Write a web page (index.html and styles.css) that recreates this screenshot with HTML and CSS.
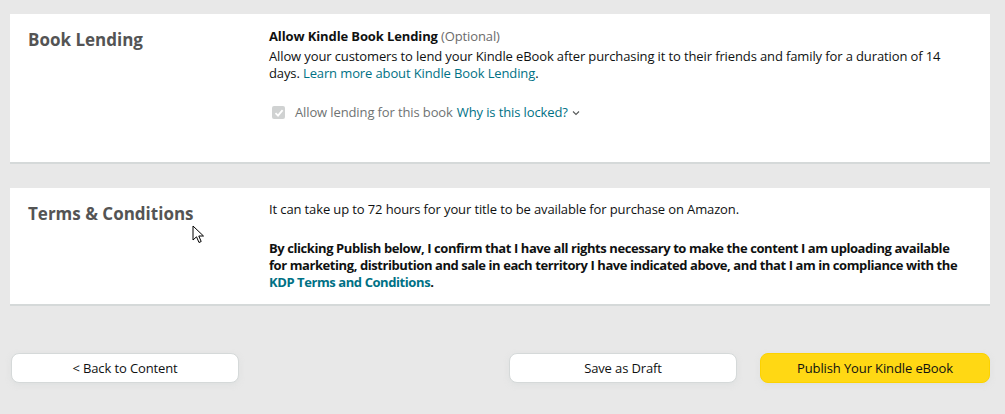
FILE: index.html
```html
<!DOCTYPE html>
<html>
<head>
<meta charset="utf-8">
<link rel="stylesheet" href="styles.css">
</head>
<body>
<div class="page">
  <section class="card card-lending">
    <h2 class="card-title">Book Lending</h2>
    <div class="card-body">
      <div class="label"><b>Allow Kindle Book Lending</b> <span class="muted">(Optional)</span></div>
      <p class="desc">Allow your customers to lend your Kindle eBook after purchasing it to their friends and family for a duration of 14 days. <a class="link" href="#">Learn more about Kindle Book Lending</a>.</p>
      <label class="check-row">
        <span class="checkbox"><svg width="10" height="10" viewBox="0 0 10 10"><path d="M1.5 5.2 L4 7.6 L8.6 2.2" fill="none" stroke="#fff" stroke-width="1.8"/></svg></span>
        <span class="check-text">Allow lending for this book</span>
        <a class="link" href="#">Why is this locked?</a>
        <svg class="chev" width="8" height="6" viewBox="0 0 8 6"><path d="M1 1.5 L4 4.5 L7 1.5" fill="none" stroke="#565959" stroke-width="1.1"/></svg>
      </label>
    </div>
  </section>

  <section class="card card-terms">
    <h2 class="card-title">Terms &amp; Conditions</h2>
    <div class="card-body">
      <p class="plain">It can take up to 72 hours for your title to be available for purchase on Amazon.</p>
      <p class="bold-para">By clicking Publish below, I confirm that I have all rights necessary to make the content I am uploading available for marketing, distribution and sale in each territory I have indicated above, and that I am in compliance with the <a class="link" href="#">KDP Terms and Conditions</a>.</p>
    </div>
    <svg class="cursor" width="14" height="20" viewBox="0 0 14 20"><path d="M1 1 L1 15 L4.5 11.8 L7 17.5 L9.2 16.5 L6.8 11 L11.5 11 Z" fill="#fff" stroke="#000" stroke-width="1"/></svg>
  </section>

  <div class="actions">
    <button class="btn">&lt; Back to Content</button>
    <div class="actions-right">
      <button class="btn">Save as Draft</button>
      <button class="btn btn-primary">Publish Your Kindle eBook</button>
    </div>
  </div>
</div>
</body>
</html>
```
FILE: styles.css
```css
* { box-sizing: border-box; }
html, body { margin: 0; padding: 0; }
body {
  background: #e8e8e8;
  font-family: "Open Sans", "Noto Sans", Arial, sans-serif;
  font-size: 13px;
  line-height: 17px;
  letter-spacing: -0.12px;
  color: #0f1111;
  width: 1005px;
  height: 414px;
  overflow: hidden;
}
.page {
  padding: 14px 15px 0 10px;
}
.card {
  background: #fff;
  border-bottom: 2px solid #d5d9d9;
  display: grid;
  grid-template-columns: 259px 1fr;
  padding: 14px 28px 0 0;
  position: relative;
}
.card-lending { height: 150px; }
.card-terms { height: 118px; margin-top: 24px; padding-top: 13px; }
.card-title {
  margin: 0;
  padding-left: 18px;
  font-size: 17px;
  line-height: 24px;
  font-weight: 700;
  letter-spacing: 0;
  color: #545454;
}
.card-terms .card-title { margin-top: 1px; }
.card-body p { margin: 0; }
.label { margin-bottom: 3px; }
.label b { font-weight: 700; }
.muted { color: #6b6b6b; }
.desc { margin-bottom: 22px !important; }
.link { color: #007185; text-decoration: none; }
.check-row {
  display: flex;
  align-items: center;
  gap: 5px;
  color: #6f7373;
}
.check-row .link { margin-left: -1px; }
.checkbox {
  width: 13px;
  height: 13px;
  border-radius: 2px;
  background: #d0d2d2;
  display: flex;
  align-items: center;
  justify-content: center;
  margin-right: 5px;
  margin-left: 3px;
}
.chev { margin-left: -1px; }
.plain { margin-bottom: 22px !important; }
.bold-para { font-weight: 700; letter-spacing: -0.42px; }
.bold-para .link { font-weight: 700; }
.cursor { position: absolute; left: 182px; top: 37px; }
.actions {
  display: flex;
  justify-content: space-between;
  margin-top: 47px;
  padding-left: 1px;
}
.actions-right { display: flex; gap: 23px; }
.btn {
  font-family: inherit;
  font-size: 13px;
  letter-spacing: -0.12px;
  color: #0f1111;
  width: 228px;
  height: 30px;
  border: 1px solid #d5d9d9;
  border-radius: 8px;
  background: #fff;
  box-shadow: 0 2px 5px rgba(213, 217, 217, 0.5);
  padding: 0;
}
.btn-primary {
  width: 230px;
  background: #ffd814;
  border-color: #fcd200;
}
```
